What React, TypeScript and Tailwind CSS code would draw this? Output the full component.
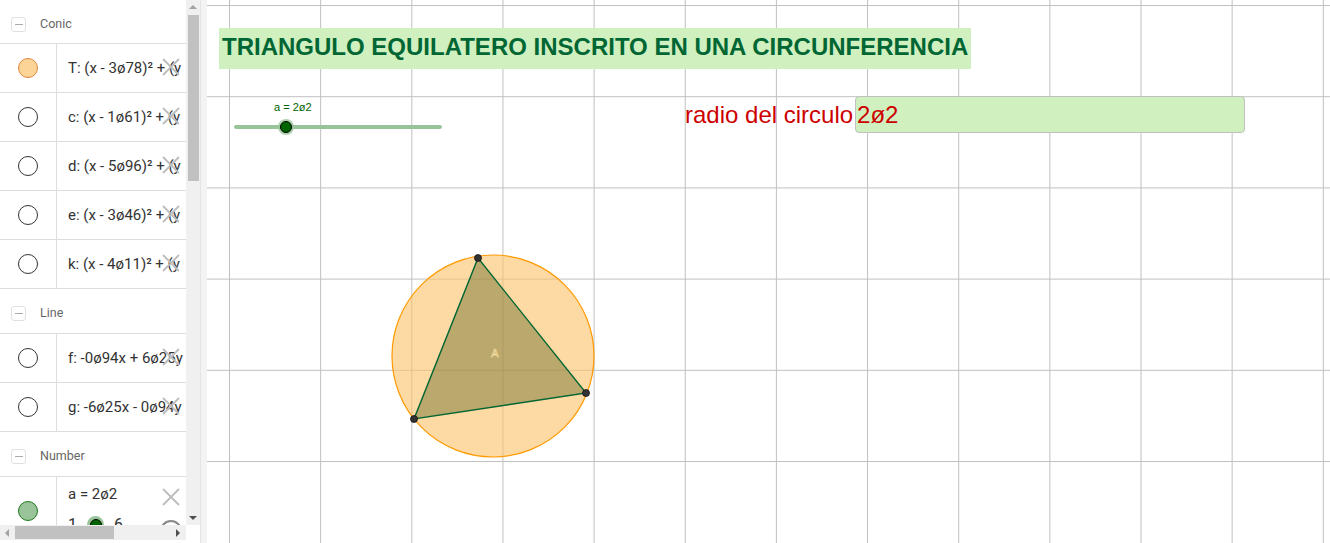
type Item = { label: string; icon: 'orange' | 'white' }

// only the visible part of each definition; the rest is clipped by the panel
const conics: Item[] = [
  { label: 'T: (x - 3ø78)² + (y', icon: 'orange' },
  { label: 'c: (x - 1ø61)² + (y', icon: 'white' },
  { label: 'd: (x - 5ø96)² + (y', icon: 'white' },
  { label: 'e: (x - 3ø46)² + (y', icon: 'white' },
  { label: 'k: (x - 4ø11)² + (y', icon: 'white' },
]

const lines: Item[] = [
  { label: 'f: -0ø94x + 6ø25y', icon: 'white' },
  { label: 'g: -6ø25x - 0ø94y', icon: 'white' },
]

function MinusBox() {
  return (
    <div className="ml-[11px] w-[15px] h-[15px] rounded-[3px] border border-[#e0e0e0] flex items-center justify-center">
      <div className="w-[8px] h-[1px] bg-[#aaaaaa]" />
    </div>
  )
}

function Header({ title, first }: { title: string; first?: boolean }) {
  return (
    <div className={`${first ? 'h-[44px]' : 'h-[45px]'} flex items-center pt-[5px] border-b border-[#dddddd] shrink-0`}>
      <MinusBox />
      <span className="ml-[14px] text-[12.5px] text-[#666666]">{title}</span>
    </div>
  )
}

function DeleteX({ top }: { top: string }) {
  return (
    <svg className={`absolute left-[162px] ${top} z-10`} width="18" height="18" viewBox="0 0 18 18">
      <path d="M1 1 L17 17 M17 1 L1 17" stroke="#bdbdbd" strokeWidth="1.8" fill="none" />
    </svg>
  )
}

function Row({ item }: { item: Item }) {
  return (
    <div className="h-[49px] flex border-b border-[#dddddd] shrink-0 relative">
      <div className="w-[57px] border-r border-[#dddddd] flex items-center justify-center shrink-0">
        {item.icon === 'orange' ? (
          <div className="w-[20px] h-[20px] rounded-full bg-[#fdd497] border border-[#d9883a]" />
        ) : (
          <div className="w-[20px] h-[20px] rounded-full bg-white border border-[#333333]" />
        )}
      </div>
      <div className="flex-1 flex items-center pl-[11px] text-[15px] text-[#333333] whitespace-nowrap overflow-hidden">
        {item.label}
      </div>
      <DeleteX top="top-[14px]" />
    </div>
  )
}

function AlgebraPanel() {
  return (
    <div className="w-[200px] h-full flex shrink-0 bg-white relative" style={{ fontFamily: 'Roboto, "Liberation Sans", sans-serif' }}>
      <div className="w-[186px] h-full flex flex-col overflow-hidden">
        <div className="flex-1 flex flex-col overflow-hidden">
          <Header title="Conic" first />
          {conics.map((c) => (
            <Row key={c.label} item={c} />
          ))}
          <Header title="Line" />
          {lines.map((c) => (
            <Row key={c.label} item={c} />
          ))}
          <Header title="Number" />
          <div className="flex-1 flex relative min-h-0">
            <div className="w-[57px] border-r border-[#dddddd] flex justify-center pt-[24px] shrink-0">
              <div className="w-[20px] h-[20px] rounded-full bg-[#99c499] border border-[#1f7a1f]" />
            </div>
            <div className="pl-[11px] pt-[6px] text-[15px] text-[#333333]">
              <div>a = 2ø2</div>
              <div className="flex items-center mt-[7px] gap-[10px] text-[16px]">
                <span>1</span>
                <span className="w-[17px] h-[17px] rounded-full bg-[#99c499] flex items-center justify-center">
                  <span className="w-[12px] h-[12px] rounded-full bg-[#006400] border border-black" />
                </span>
                <span>6</span>
              </div>
            </div>
            <DeleteX top="top-[11px]" />
            <div className="absolute left-[160px] top-[43px] w-[22px] h-[22px] rounded-full border-2 border-[#888888]" />
          </div>
        </div>
        <div className="h-[15px] bg-[#f0f0f0] flex items-center shrink-0 relative">
          <span className="absolute left-[5px] top-[4px] w-0 h-0 border-y-[4px] border-y-transparent border-r-[4px] border-r-[#a3a3a3]" />
          <div className="ml-[15px] w-[99px] h-[13px] bg-[#c1c1c1]" />
          <span className="absolute left-[176px] top-[4px] w-0 h-0 border-y-[4px] border-y-transparent border-l-[4px] border-l-[#505050]" />
        </div>
        <div className="h-[3px] bg-white shrink-0" />
      </div>
      <div className="w-[14px] h-[525px] bg-[#f0f0f0] flex flex-col items-center relative">
        <span className="mt-[5px] w-0 h-0 border-x-[4px] border-x-transparent border-b-[4px] border-b-[#a3a3a3]" />
        <div className="mt-[6px] w-[11px] h-[166px] bg-[#c1c1c1]" />
        <span className="absolute bottom-[5px] w-0 h-0 border-x-[4px] border-x-transparent border-t-[4px] border-t-[#505050]" />
      </div>
    </div>
  )
}

function Graphics() {
  const xs: number[] = []
  for (let i = 0; i < 13; i++) xs.push(229.5 + 91.15 * i)
  const ys: number[] = []
  for (let i = 0; i < 7; i++) ys.push(5.5 + 91.2 * i)
  const A = [478, 258]
  const B = [586, 393]
  const C = [414, 419]

  return (
    <div className="flex-1 h-full relative bg-white overflow-hidden">
      <svg className="absolute inset-0" width="1123" height="543" viewBox="207 0 1123 543">
        {xs.map((x) => (
          <line key={'x' + x} x1={x} y1={0} x2={x} y2={543} stroke="#c0c0c0" strokeWidth={1} />
        ))}
        {ys.map((y) => (
          <line key={'y' + y} x1={207} y1={y} x2={1330} y2={y} stroke="#c0c0c0" strokeWidth={1} />
        ))}
        <circle cx={493} cy={356} r={101} fill="#fcc46a" fillOpacity={0.62} stroke="#ff9900" strokeWidth={1.2} />
        <polygon
          points={`${A[0]},${A[1]} ${B[0]},${B[1]} ${C[0]},${C[1]}`}
          fill="#6b6b2a"
          fillOpacity={0.45}
          stroke="#006633"
          strokeWidth={1.4}
        />
        {[A, B, C].map((p) => (
          <circle key={p[0]} cx={p[0]} cy={p[1]} r={3.5} fill="#333333" stroke="#111111" strokeWidth={0.8} />
        ))}
        <text
          x={495}
          y={357}
          textAnchor="middle"
          fontSize={11}
          fontFamily="'Liberation Sans', sans-serif"
          fill="#b8a060"
          stroke="#fde2a8"
          strokeWidth={0.6}
        >
          A
        </text>
        {/* slider a */}
        <line x1={236} y1={127} x2={440} y2={127} stroke="#99c499" strokeWidth={4} strokeLinecap="round" />
        <circle cx={286} cy={127} r={8} fill="#99c499" fillOpacity={0.8} />
        <circle cx={286} cy={127} r={5.5} fill="#006400" stroke="#000000" strokeWidth={1} />
        <text x={274} y={111} fontSize={11} fontFamily="'Liberation Sans', sans-serif" fill="#006400">
          a = 2ø2
        </text>
      </svg>
      <div
        className="absolute left-[12px] top-[28px] h-[41px] w-[752px] bg-[#d0f0c0] flex items-center pl-[3px] pb-[3px] text-[24px] font-bold text-[#006633] whitespace-nowrap"
        style={{ fontFamily: '"Liberation Sans", Arial, sans-serif' }}
      >
        TRIANGULO EQUILATERO INSCRITO EN UNA CIRCUNFERENCIA
      </div>
      <div
        className="absolute left-[478px] top-[96px] flex items-start text-[24px] leading-[28px] text-[#cc0000] whitespace-nowrap"
        style={{ fontFamily: '"Liberation Sans", Arial, sans-serif' }}
      >
        <span className="mr-[2px] pt-[5px]">radio del circulo</span>
        <div className="h-[37px] w-[390px] bg-[#d0f0c0] border border-[#c0c0c0] rounded-[4px] pl-[1px] pt-[4px]">
          2ø2
        </div>
      </div>
    </div>
  )
}

export default function App() {
  return (
    <div className="w-[1330px] h-[543px] flex overflow-hidden bg-white">
      <AlgebraPanel />
      <div className="w-[7px] h-full bg-[#f4f4f4] border-l border-[#e4e4e4] shrink-0" />
      <Graphics />
    </div>
  )
}
